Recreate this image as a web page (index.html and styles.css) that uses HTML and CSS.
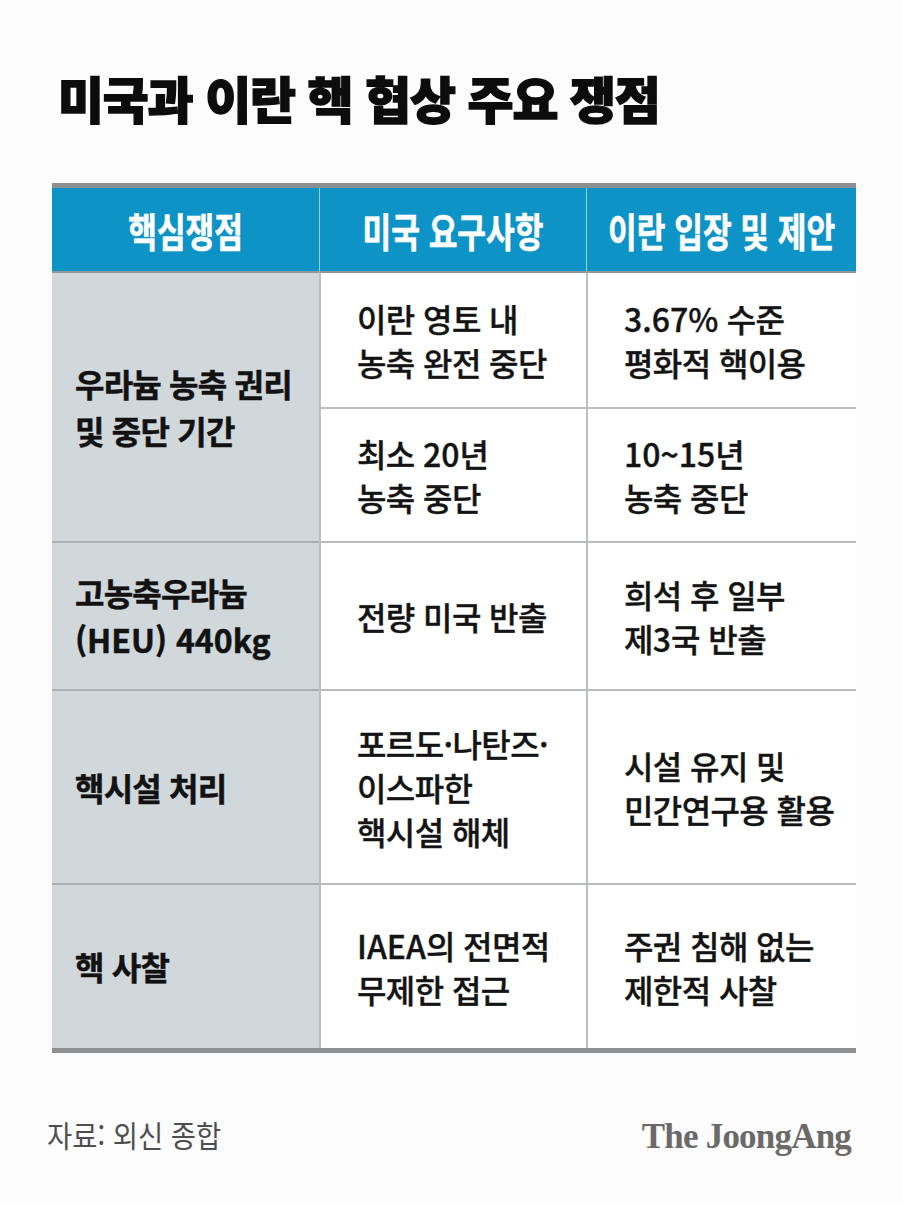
FILE: index.html
```html
<!DOCTYPE html>
<html lang="ko">
<head>
<meta charset="utf-8">
<title>미국과 이란 핵 협상 주요 쟁점</title>
<link rel="stylesheet" href="styles.css">
</head>
<body>
<div class="page">
  <h1 class="title">미국과 이란 핵 협상 주요 쟁점</h1>

  <div class="table">
    <div class="th"><span class="squeeze">핵심쟁점</span></div>
    <div class="th sep"><span class="squeeze">미국 요구사항</span></div>
    <div class="th sep"><span class="squeeze">이란 입장 및 제안</span></div>

    <div class="key span2"><div class="txt">우라늄 농축 권리<br>및 중단 기간</div></div>
    <div class="td"><div class="txt">이란 영토 내<br>농축 완전 중단</div></div>
    <div class="td"><div class="txt"><span class="lat">3.67%</span> 수준<br>평화적 핵이용</div></div>
    <div class="td"><div class="txt">최소 <span class="lat">20</span>년<br>농축 중단</div></div>
    <div class="td"><div class="txt"><span class="lat">10~15</span>년<br>농축 중단</div></div>

    <div class="key"><div class="txt">고농축우라늄<br><span class="lat">(HEU) 440kg</span></div></div>
    <div class="td"><div class="txt">전량 미국 반출</div></div>
    <div class="td"><div class="txt">희석 후 일부<br>제<span class="lat">3</span>국 반출</div></div>

    <div class="key"><div class="txt">핵시설 처리</div></div>
    <div class="td"><div class="txt">포르도·나탄즈·<br>이스파한<br>핵시설 해체</div></div>
    <div class="td"><div class="txt">시설 유지 및<br>민간연구용 활용</div></div>

    <div class="key last"><div class="txt">핵 사찰</div></div>
    <div class="td last"><div class="txt"><span class="lat">IAEA</span>의 전면적<br>무제한 접근</div></div>
    <div class="td last"><div class="txt">주권 침해 없는<br>제한적 사찰</div></div>
  </div>

  <footer class="foot">
    <span class="source"><span class="squeeze-l">자료: 외신 종합</span></span>
    <span class="logo">The JoongAng</span>
  </footer>
</div>
</body>
</html>
```

FILE: styles.css
```css
* { box-sizing: border-box; }

html, body {
  margin: 0;
  padding: 0;
  background: #fbfcfb;
}

body {
  font-family: "Noto Sans CJK KR", "Noto Sans", sans-serif;
  color: #141414;
}

.page {
  width: 903px;
  height: 1205px;
  padding-top: 72px;
  overflow: hidden;
}

.title {
  margin: 0 0 0 58px;
  height: 50px;
  font-size: 50px;
  line-height: 50px;
  font-weight: 900;
  letter-spacing: -1.2px;
  color: #0c0c0c;
  -webkit-text-stroke: 1.4px #0c0c0c;
  white-space: nowrap;
}

.table {
  margin: 61px 0 0 52px;
  width: 804px;
  display: grid;
  grid-template-columns: 267px 267px 270px;
  grid-template-rows: 85px 136px 134px 148px 194px 163px;
  border-top: 5px solid #8d8f90;
  border-bottom: 5px solid #8d8f90;
}

.th {
  background: #0e93c6;
  border-bottom: 2px solid #8f9599;
  display: flex;
  align-items: center;
  justify-content: center;
  color: #ffffff;
  font-size: 40px;
  font-weight: 700;
  -webkit-text-stroke: 0.6px #ffffff;
  white-space: nowrap;
}

.th.sep {
  border-left: 1px solid #8fd3ee;
}

.th .squeeze {
  display: inline-block;
  transform: scaleX(0.78);
  transform-origin: center center;
}

.key {
  background: #d1d8dc;
  display: flex;
  align-items: center;
  padding-left: 23px;
  font-size: 32px;
  font-weight: 700;
  line-height: 47px;
  letter-spacing: -0.8px;
  color: #121212;
  -webkit-text-stroke: 0.5px #121212;
  border-bottom: 2px solid #a9b0b4;
}

.key.span2 {
  grid-row: 2 / span 2;
}

.td {
  background: #ffffff;
  display: flex;
  align-items: center;
  font-size: 32px;
  font-weight: 500;
  line-height: 44px;
  letter-spacing: -0.6px;
  color: #141414;
  -webkit-text-stroke: 0.35px #141414;
  border-left: 2px solid #bcbfc0;
  border-bottom: 2px solid #b9bcbd;
  padding-left: 36px;
}

.txt {
  white-space: nowrap;
}

.last { border-bottom: none; }

.lat {
  letter-spacing: 0;
}

.foot {
  margin: 66px 0 0 47px;
  width: 804px;
  display: flex;
  justify-content: space-between;
  align-items: flex-start;
}

.source {
  font-size: 30px;
  line-height: 30px;
  color: #4e4e4e;
  white-space: nowrap;
}

.squeeze-l {
  display: inline-block;
  transform: scaleX(0.913);
  transform-origin: left center;
}

.logo {
  font-family: "Liberation Serif", "DejaVu Serif", serif;
  font-weight: 700;
  font-size: 35px;
  line-height: 35px;
  letter-spacing: -0.8px;
  color: #6a6a6a;
  white-space: nowrap;
}
```
